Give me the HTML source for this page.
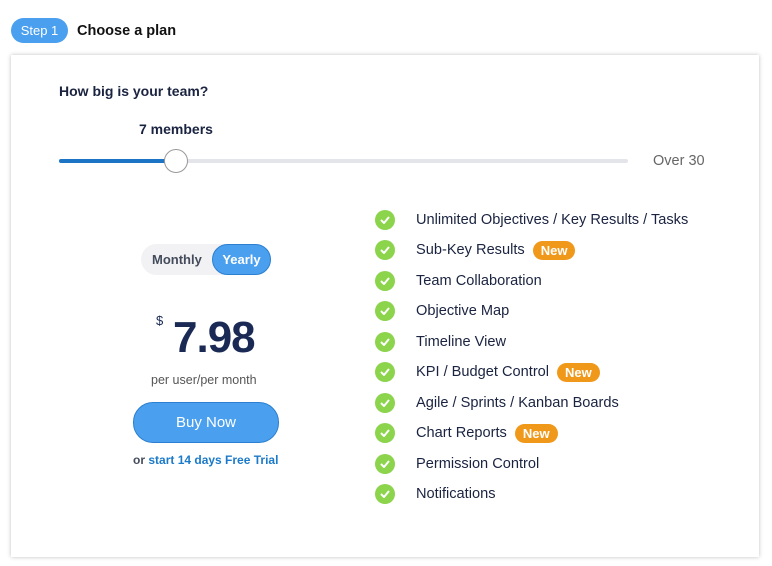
<!DOCTYPE html>
<html><head><style>
body{margin:0;width:772px;height:566px;background:#fff;font-family:"Liberation Sans",sans-serif;position:relative;overflow:hidden;color:#1a2340}
.a{position:absolute}
.step{left:11px;top:18px;width:57px;height:25px;border-radius:13px;background:#4a9fef;color:#fff;font-size:13px;line-height:25px;text-align:center}
.card{left:11px;top:55px;width:748px;height:502px;background:#fff;box-shadow:0 0 4px rgba(0,0,0,.25)}
.feat{left:375px;height:20px;display:flex;align-items:center;font-size:14.6px;color:#1a2340;white-space:nowrap}
.ck{width:20px;height:20px;border-radius:50%;background:#8bd44c;margin-right:21px;display:flex;align-items:center;justify-content:center}
.new{background:#f0981a;color:#fff;font-size:13px;font-weight:bold;border-radius:10px;padding:1px 8px;margin-left:8px;line-height:17px}
</style></head><body>
<div class="a step">Step 1</div>
<div class="a" style="left:77px;top:23px;font-size:14.5px;font-weight:bold;color:#111">Choose a plan</div>
<div class="a card"></div>
<div class="a" style="left:59px;top:83px;font-size:14px;font-weight:bold">How big is your team?</div>
<div class="a" style="left:139px;top:121px;font-size:14px;font-weight:bold">7 members</div>
<div class="a" style="left:59px;top:159px;width:569px;height:4px;background:#e4e5ea;border-radius:2px"></div>
<div class="a" style="left:59px;top:159px;width:117px;height:4px;background:#1b75c4;border-radius:2px"></div>
<div class="a" style="left:164px;top:149px;width:22px;height:22px;border-radius:50%;background:#fff;border:1px solid #999"></div>
<div class="a" style="left:653px;top:153px;font-size:14.5px;color:#666">Over 30</div>
<div class="a" style="left:141px;top:244px;width:130px;height:31px;border-radius:16px;background:#f2f2f4"></div>
<div class="a" style="left:152px;top:252px;font-size:13px;font-weight:bold;color:#444c5c">Monthly</div>
<div class="a" style="left:212px;top:244px;width:57px;height:29px;border-radius:16px;background:#4a9fef;border:1px solid #2a7fd0;color:#fff;font-size:13px;font-weight:bold;line-height:29px;text-align:center">Yearly</div>
<div class="a" style="left:156px;top:313px;font-size:13px;color:#1a2a55">$</div>
<div class="a" style="left:173px;top:314px;font-size:44px;font-weight:bold;color:#1a2a55;letter-spacing:-1px;line-height:48px">7.98</div>
<div class="a" style="left:151px;top:373px;font-size:12.5px;color:#555">per user/per month</div>
<div class="a" style="left:133px;top:402px;width:144px;height:39px;border-radius:20px;background:#4a9fef;border:1px solid #2a7fd0;color:#fff;font-size:15px;line-height:39px;text-align:center">Buy Now</div>
<div class="a" style="left:133px;top:453px;font-size:12px;font-weight:bold;color:#444c5c">or <span style="color:#1b7ac9">start 14 days Free Trial</span></div>
<div class="a feat" style="top:210px"><div class="ck"><svg width="10" height="8"><path d="M1 4l3 3 5-6" stroke="#fff" stroke-width="2" fill="none"/></svg></div>Unlimited Objectives / Key Results / Tasks</div>
<div class="a feat" style="top:240px"><div class="ck"><svg width="10" height="8"><path d="M1 4l3 3 5-6" stroke="#fff" stroke-width="2" fill="none"/></svg></div>Sub-Key Results<span class="new">New</span></div>
<div class="a feat" style="top:271px"><div class="ck"><svg width="10" height="8"><path d="M1 4l3 3 5-6" stroke="#fff" stroke-width="2" fill="none"/></svg></div>Team Collaboration</div>
<div class="a feat" style="top:301px"><div class="ck"><svg width="10" height="8"><path d="M1 4l3 3 5-6" stroke="#fff" stroke-width="2" fill="none"/></svg></div>Objective Map</div>
<div class="a feat" style="top:332px"><div class="ck"><svg width="10" height="8"><path d="M1 4l3 3 5-6" stroke="#fff" stroke-width="2" fill="none"/></svg></div>Timeline View</div>
<div class="a feat" style="top:362px"><div class="ck"><svg width="10" height="8"><path d="M1 4l3 3 5-6" stroke="#fff" stroke-width="2" fill="none"/></svg></div>KPI / Budget Control<span class="new">New</span></div>
<div class="a feat" style="top:393px"><div class="ck"><svg width="10" height="8"><path d="M1 4l3 3 5-6" stroke="#fff" stroke-width="2" fill="none"/></svg></div>Agile / Sprints / Kanban Boards</div>
<div class="a feat" style="top:423px"><div class="ck"><svg width="10" height="8"><path d="M1 4l3 3 5-6" stroke="#fff" stroke-width="2" fill="none"/></svg></div>Chart Reports<span class="new">New</span></div>
<div class="a feat" style="top:454px"><div class="ck"><svg width="10" height="8"><path d="M1 4l3 3 5-6" stroke="#fff" stroke-width="2" fill="none"/></svg></div>Permission Control</div>
<div class="a feat" style="top:484px"><div class="ck"><svg width="10" height="8"><path d="M1 4l3 3 5-6" stroke="#fff" stroke-width="2" fill="none"/></svg></div>Notifications</div>
</body></html>
